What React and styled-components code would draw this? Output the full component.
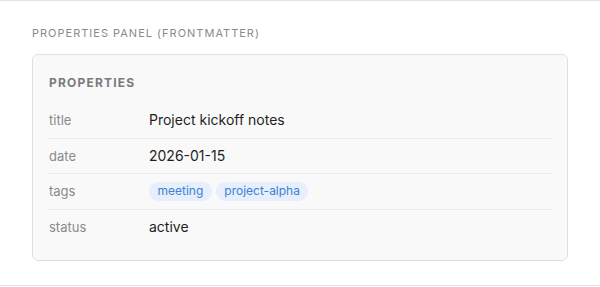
import React from "react";
import styled, { createGlobalStyle } from "styled-components";

const GlobalStyle = createGlobalStyle`
  body {
    margin: 0;
    background: #ffffff;
    font-family: Inter, "Noto Sans", sans-serif;
    -webkit-font-smoothing: antialiased;
  }
`;

const Section = styled.section`
  border-top: 1px solid #e2e2e2;
  border-bottom: 1px solid #e2e2e2;
  padding: 24px 32px 24px;
`;

const Caption = styled.div`
  font-size: 11px;
  line-height: 16px;
  letter-spacing: 1px;
  color: #8a8a8a;
  text-transform: uppercase;
  margin-bottom: 13px;
`;

const Card = styled.div`
  background: #f9f9f9;
  border: 1px solid #e0e0e0;
  border-radius: 6px;
  padding: 20px 16px 16px;
`;

const CardTitle = styled.div`
  font-size: 12px;
  font-weight: 700;
  line-height: 16px;
  letter-spacing: 1.2px;
  color: #7a7a7a;
  text-transform: uppercase;
  margin-bottom: 12px;
`;

const Row = styled.div`
  display: grid;
  grid-template-columns: 100px 1fr;
  align-items: center;
  padding: 8px 0;
  line-height: 18.5px;
  border-bottom: ${(p) => (p.$last ? "none" : "1px solid #ebebeb")};
`;

const Key = styled.div`
  font-size: 13px;
  color: #8a8a8a;
`;

const Value = styled.div`
  font-size: 14px;
  color: #1f1f1f;
`;

const Tags = styled.div`
  display: flex;
  gap: 4px;
`;

const Tag = styled.span`
  font-size: 12px;
  line-height: 18.5px;
  padding: 0 8.5px;
  border-radius: 10px;
  background: #e6effb;
  color: #3d7fd6;
`;

const props = [
  { key: "title", value: "Project kickoff notes" },
  { key: "date", value: "2026-01-15" },
  { key: "tags", tags: ["meeting", "project-alpha"] },
  { key: "status", value: "active" },
];

export default function App() {
  return (
    <>
      <GlobalStyle />
      <Section>
        <Caption>Properties panel (frontmatter)</Caption>
        <Card>
          <CardTitle>Properties</CardTitle>
          {props.map((p, i) => (
            <Row key={p.key} $last={i === props.length - 1}>
              <Key>{p.key}</Key>
              {p.tags ? (
                <Tags>
                  {p.tags.map((t) => (
                    <Tag key={t}>{t}</Tag>
                  ))}
                </Tags>
              ) : (
                <Value>{p.value}</Value>
              )}
            </Row>
          ))}
        </Card>
      </Section>
    </>
  );
}
